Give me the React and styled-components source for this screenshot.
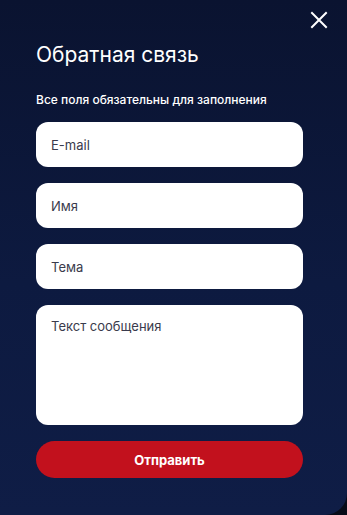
import React from 'react';
import styled, { createGlobalStyle } from 'styled-components';

const GlobalStyle = createGlobalStyle`
  html, body {
    margin: 0;
    padding: 0;
    background: #070b18;
  }
  * {
    box-sizing: border-box;
  }
`;

function CloseIcon() {
  return (
    <svg width="18" height="18" viewBox="0 0 18 18" fill="none">
      <path d="M2 2L16 16M16 2L2 16" stroke="#ffffff" strokeWidth="2" strokeLinecap="square" />
    </svg>
  );
}

const FIELDS = ['E-mail', 'Имя', 'Тема'];

export default function App() {
  return (
    <>
      <GlobalStyle />
      <Panel>
        <CloseButton aria-label="Закрыть">
          <CloseIcon />
        </CloseButton>
        <Title>Обратная связь</Title>
        <Note>Все поля обязательны для заполнения</Note>
        <Form onSubmit={e => e.preventDefault()}>
          {FIELDS.map(name => (
            <Input key={name} placeholder={name} />
          ))}
          <TextArea placeholder="Текст сообщения" />
          <Submit type="submit">Отправить</Submit>
        </Form>
      </Panel>
    </>
  );
}

const Panel = styled.div`
  position: relative;
  width: 347px;
  height: 515px;
  padding: 41px 44px 0 36px;
  background: linear-gradient(180deg, #0a1330 0%, #0d1a40 55%, #0f1d46 100%);
  border-bottom-right-radius: 22px;
  font-family: Inter, 'Noto Sans', sans-serif;
  overflow: hidden;
`;

const CloseButton = styled.button`
  position: absolute;
  top: 11px;
  right: 19px;
  width: 18px;
  height: 18px;
  padding: 0;
  border: none;
  background: none;
  display: flex;
  cursor: pointer;
`;

const Title = styled.h1`
  margin: 0;
  font-size: 21px;
  line-height: 27px;
  font-weight: 400;
  color: #ffffff;
`;

const Note = styled.p`
  margin: 24px 0 0;
  font-size: 12px;
  line-height: 16px;
  font-weight: 500;
  color: #ffffff;
`;

const Form = styled.form`
  margin-top: 14px;
  display: flex;
  flex-direction: column;
  gap: 16px;
`;

const fieldBase = `
  width: 100%;
  border: none;
  outline: none;
  border-radius: 12px;
  background: #ffffff;
  font-family: Inter, 'Noto Sans', sans-serif;
  font-size: 13px;
  color: #2b2d3d;
  padding: 0 15px;
  &::placeholder {
    color: #3a3b4c;
  }
`;

const Input = styled.input`
  ${fieldBase}
  height: 45px;
`;

const TextArea = styled.textarea`
  ${fieldBase}
  height: 120px;
  padding-top: 13px;
  resize: none;
  line-height: 16px;
`;

const Submit = styled.button`
  height: 37px;
  border: none;
  border-radius: 19px;
  background: #c2111d;
  color: #ffffff;
  font-family: Inter, 'Noto Sans', sans-serif;
  font-size: 13px;
  font-weight: 700;
  cursor: pointer;
`;
